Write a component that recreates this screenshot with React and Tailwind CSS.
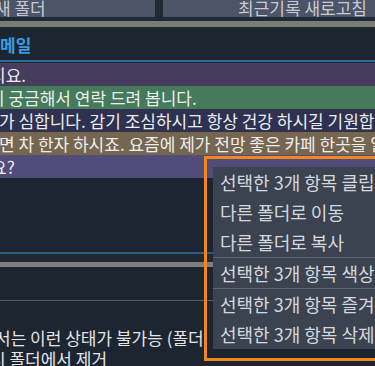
import React from 'react';

const rows = [
  { bg: 'bg-[#463c5e]', text: '지요.', shift: '-ml-[10px]' },
  { bg: 'bg-[#457a5b]', text: '지 궁금해서 연락 드려 봅니다.', shift: '-ml-[11px]' },
  { bg: 'bg-[#2e3250]', text: '가 심합니다. 감기 조심하시고 항상 건강 하시길 기원합니다.', shift: '-ml-[1px]' },
  { bg: 'bg-[#77664f]', text: '면 차 한자 하시죠. 요즘에 제가 전망 좋은 카페 한곳을 알게 되었어요.', shift: '-ml-[1px]' },
  { bg: 'bg-[#514c7a]', text: '요?', shift: '-ml-[9px]' },
];

const menu = [
  { label: '선택한 3개 항목 클립보드로 복사' },
  { label: '다른 폴더로 이동' },
  { label: '다른 폴더로 복사', sep: true },
  { label: '선택한 3개 항목 색상 지정', sep: true },
  { label: '선택한 3개 항목 즐겨찾기' },
  { label: '선택한 3개 항목 삭제' },
];

export default function App() {
  return (
    <div className="relative w-[375px] h-[366px] overflow-hidden bg-[#1c2530] font-['Noto_Sans_CJK_KR','Noto_Sans',sans-serif] text-[17px]">
      {/* toolbar buttons */}
      <div className="flex h-[17px] bg-[#1e2a36]">
        <div className="w-[155px] bg-[#4b5567] overflow-hidden">
          <div className="-ml-[5px] text-[17px] leading-[16px] text-[#c8ccd2] whitespace-nowrap">새 폴더</div>
        </div>
        <div className="w-[8px]" />
        <div className="flex-1 bg-[#4b5567] overflow-hidden flex justify-end pr-[8px]">
          <div className="text-[17px] leading-[16px] text-[#c8ccd2] whitespace-nowrap">최근기록 새로고침</div>
        </div>
      </div>
      <div className="h-[4px] bg-[#1e2a36]" />
      <div className="h-[6px] bg-[#7c7b74]" />
      <div className="h-[1px] bg-[#1e2a36]" />

      {/* mail header */}
      <div className="h-[32px] bg-[#1b2631] flex items-center">
        <span className="text-[17px] font-bold text-[#3a9be0] leading-none">메일</span>
      </div>
      <div className="h-[2px] bg-[#2d6a98]" />
      <div className="h-[1px] bg-[#1b2631]" />

      {/* message rows */}
      <div className="flex flex-col">
        {rows.map((r, i) => (
          <div key={i} className={`h-[23px] ${r.bg} flex items-center overflow-hidden`}>
            <span className={`${r.shift} whitespace-nowrap text-[#eceef0] leading-[23px]`}>{r.text}</span>
          </div>
        ))}
      </div>

      <div className="h-[74px] bg-[#1b2430]" />
      <div className="h-[2px] bg-[#2b5f8a]" />
      <div className="h-[8px] bg-[#22282f]" />
      <div className="h-[5px] bg-[#7e7e7e]" />
      <div className="h-[33px] bg-[#1c2530]" />
      <div className="h-px bg-[#555c66]" />

      {/* bottom text */}
      <div className="pt-[26px] text-[#e4e6e9] leading-[21px] whitespace-nowrap">
        <div className="-ml-[5px]">서는 이런 상태가 불가능 (폴더</div>
        <div className="-ml-[10px]">시 폴더에서 제거</div>
      </div>

      {/* context menu overlay */}
      <div className="absolute left-[204px] top-[156px] w-[190px] h-[205px] border-[3px] border-[#f0871f] pt-[8px] pl-[6px]">
        <div className="bg-[#3b4351] flex flex-col">
          {menu.map((m, i) => (
            <React.Fragment key={i}>
              <div className="h-[30px] flex items-center px-[7px] text-[18px] text-[#d5d9df] whitespace-nowrap">
                {m.label}
              </div>
              {m.sep && <div className="h-px bg-[#5b6370]" />}
            </React.Fragment>
          ))}
        </div>
      </div>
    </div>
  );
}
